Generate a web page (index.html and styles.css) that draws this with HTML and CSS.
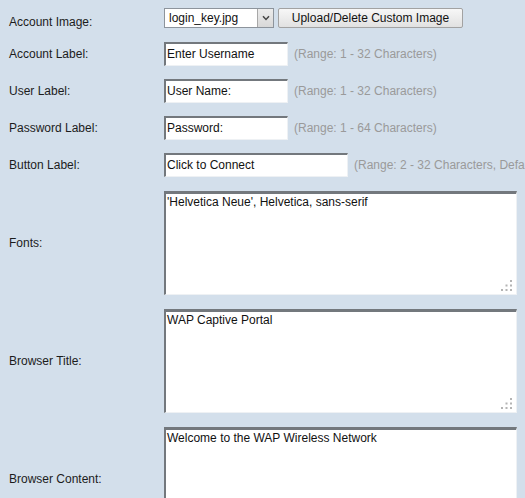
FILE: index.html
```html
<!DOCTYPE html>
<html>
<head>
<meta charset="utf-8">
<link rel="stylesheet" href="styles.css">
</head>
<body>
<div class="form">
  <div class="row first">
    <label class="lbl lbl-low">Account Image:</label>
    <div class="ctl">
      <span class="sel-wrap">
        <select class="sel"><option>login_key.jpg</option></select>
        <span class="sel-arrow"><svg width="8" height="6" viewBox="0 0 8 6"><path d="M1 1.2 L4 4.4 L7 1.2" fill="none" stroke="#444" stroke-width="1.5"/></svg></span>
      </span>
      <button class="btn">Upload/Delete Custom Image</button>
    </div>
  </div>
  <div class="row">
    <label class="lbl">Account Label:</label>
    <div class="ctl"><input class="inp" type="text" value="Enter Username"><span class="hint">(Range: 1 - 32 Characters)</span></div>
  </div>
  <div class="row">
    <label class="lbl">User Label:</label>
    <div class="ctl"><input class="inp" type="text" value="User Name:"><span class="hint">(Range: 1 - 32 Characters)</span></div>
  </div>
  <div class="row">
    <label class="lbl">Password Label:</label>
    <div class="ctl"><input class="inp" type="text" value="Password:"><span class="hint">(Range: 1 - 64 Characters)</span></div>
  </div>
  <div class="row">
    <label class="lbl">Button Label:</label>
    <div class="ctl"><input class="inp wide" type="text" value="Click to Connect"><span class="hint">(Range: 2 - 32 Characters, Default: Click to Connect)</span></div>
  </div>
  <div class="tarows">
    <div class="tarow">
      <label class="lbl">Fonts:</label>
      <div class="ta-wrap">
        <textarea class="ta">'Helvetica Neue', Helvetica, sans-serif</textarea>
        <svg class="grip" width="12" height="12" viewBox="0 0 12 12"><g fill="#b4b4b4"><rect x="9" y="0" width="2" height="2"/><rect x="4.5" y="4.5" width="2" height="2"/><rect x="9" y="4.5" width="2" height="2"/><rect x="0" y="9" width="2" height="2"/><rect x="4.5" y="9" width="2" height="2"/><rect x="9" y="9" width="2" height="2"/></g></svg>
      </div>
    </div>
    <div class="tarow">
      <label class="lbl">Browser Title:</label>
      <div class="ta-wrap">
        <textarea class="ta">WAP Captive Portal</textarea>
        <svg class="grip" width="12" height="12" viewBox="0 0 12 12"><g fill="#b4b4b4"><rect x="9" y="0" width="2" height="2"/><rect x="4.5" y="4.5" width="2" height="2"/><rect x="9" y="4.5" width="2" height="2"/><rect x="0" y="9" width="2" height="2"/><rect x="4.5" y="9" width="2" height="2"/><rect x="9" y="9" width="2" height="2"/></g></svg>
      </div>
    </div>
    <div class="tarow">
      <label class="lbl">Browser Content:</label>
      <div class="ta-wrap">
        <textarea class="ta">Welcome to the WAP Wireless Network</textarea>
        <svg class="grip" width="12" height="12" viewBox="0 0 12 12"><g fill="#b4b4b4"><rect x="9" y="0" width="2" height="2"/><rect x="4.5" y="4.5" width="2" height="2"/><rect x="9" y="4.5" width="2" height="2"/><rect x="0" y="9" width="2" height="2"/><rect x="4.5" y="9" width="2" height="2"/><rect x="9" y="9" width="2" height="2"/></g></svg>
      </div>
    </div>
  </div>
</div>
</body>
</html>
```
FILE: styles.css
```css
html, body {
  margin: 0;
  padding: 0;
  background: #d3dfeb;
  overflow: hidden;
}
body {
  font-family: "Liberation Sans", Arial, sans-serif;
  font-size: 12px;
  color: #1c1c1c;
}
.form {
  display: flex;
  flex-direction: column;
}
.row {
  display: flex;
  align-items: center;
  height: 37px;
}
.row.first {
  height: 35px;
}
.lbl {
  flex: 0 0 155px;
  padding-left: 9px;
  color: #1c1c1c;
}
.lbl-low {
  margin-top: 8px;
}
.ctl {
  display: flex;
  align-items: center;
  white-space: nowrap;
}
.sel-wrap {
  position: relative;
  display: inline-block;
  width: 110px;
  height: 20px;
}
.sel {
  -webkit-appearance: none;
  appearance: none;
  box-sizing: border-box;
  width: 110px;
  height: 20px;
  margin: 0;
  padding: 0 0 0 4px;
  border: 1px solid #8d949c;
  border-radius: 0;
  background: #fff;
  font-family: "Liberation Sans", Arial, sans-serif;
  font-size: 12px;
  color: #111;
}
.sel-arrow {
  position: absolute;
  right: 1px;
  top: 1px;
  width: 16px;
  height: 18px;
  box-sizing: border-box;
  border-left: 1px solid #a8a8a8;
  background: linear-gradient(#ececec, #d8d8d8);
  display: flex;
  align-items: center;
  justify-content: center;
}
.btn {
  margin-left: 4px;
  width: 185px;
  height: 20px;
  box-sizing: border-box;
  padding: 0;
  border: 1px solid #a2a2a2;
  border-radius: 2px;
  background: linear-gradient(#f7f7f7, #e1e1e1);
  font-family: "Liberation Sans", Arial, sans-serif;
  font-size: 12px;
  color: #111;
}
.inp {
  box-sizing: border-box;
  width: 124px;
  height: 24px;
  margin: 0;
  padding: 0 0 0 1px;
  border-top: 2px solid #73787d;
  border-left: 2px solid #73787d;
  border-right: 1px solid #eef1f4;
  border-bottom: 1px solid #eef1f4;
  background: #fff;
  font-family: "Liberation Sans", Arial, sans-serif;
  font-size: 12px;
  color: #111;
  outline: none;
}
.inp.wide {
  width: 184px;
}
.hint {
  margin-left: 6px;
  color: #9a9a9a;
}
.tarows {
  display: flex;
  flex-direction: column;
  gap: 14px;
  margin-top: 8px;
}
.tarow {
  display: flex;
  align-items: center;
}
.ta-wrap {
  position: relative;
  width: 353px;
  height: 104px;
  flex: 0 0 353px;
}
.ta {
  box-sizing: border-box;
  width: 353px;
  height: 104px;
  margin: 0;
  padding: 1px 1px;
  resize: none;
  border-top: 3px solid #73787d;
  border-left: 2px solid #73787d;
  border-right: 1px solid #eef1f4;
  border-bottom: 1px solid #eef1f4;
  background: #fff;
  font-family: "Liberation Sans", Arial, sans-serif;
  font-size: 12px;
  color: #111;
  outline: none;
  overflow: hidden;
  display: block;
}
.grip {
  position: absolute;
  right: 4px;
  bottom: 3px;
}
```
